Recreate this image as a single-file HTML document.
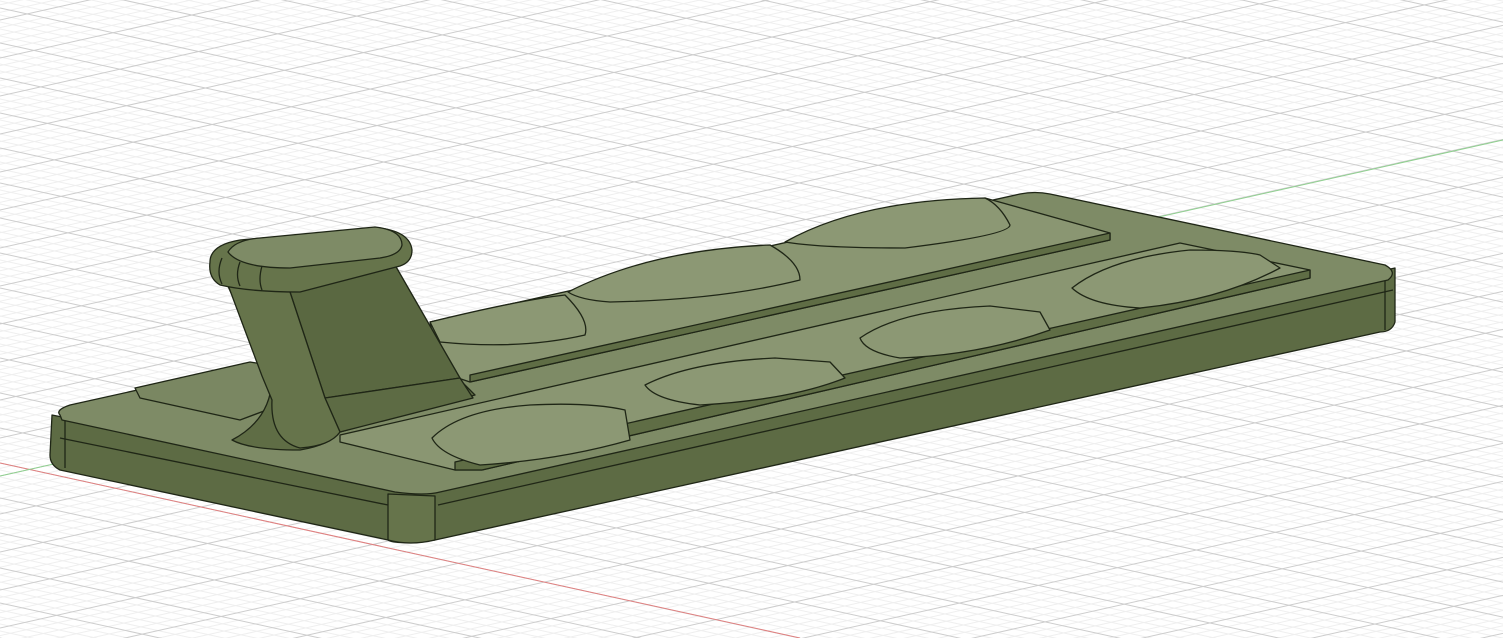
<!DOCTYPE html>
<html><head><style>html,body{margin:0;padding:0;background:#fff;overflow:hidden;width:1503px;height:638px}svg{display:block}</style></head>
<body>
<svg id="s" width="1503" height="638" viewBox="0 0 1503 638" xmlns="http://www.w3.org/2000/svg">
<rect width="1503" height="638" fill="#ffffff"/>
<g id="gmin" stroke="#efefef" stroke-width="1" fill="none"></g>
<g id="gmaj" stroke="#cdcdcd" stroke-width="1" fill="none"></g>
<line x1="0" y1="463" x2="800" y2="638" stroke="#e08080" stroke-width="1"/>
<line x1="0" y1="476" x2="1503" y2="140" stroke="#8fd08f" stroke-width="1"/>
<g stroke="#1f2616" stroke-width="1.3" stroke-linejoin="round">
<path d="M52,415 L390,482 L1395,268 L1395,322 Q1392,332 1380,332 L435,540 Q395,545 388,540 L60,470 Q50,465 50,455 Z" fill="#5d6b44"/>
<path d="M435,496 L388,494 L388,540 Q410,546 435,540 Z" fill="#66744b"/>
<line x1="60" y1="438" x2="388" y2="505" />
<line x1="438" y1="505" x2="1393" y2="290"/>
<line x1="65" y1="420" x2="65" y2="468"/>
<line x1="1385" y1="275" x2="1385" y2="330"/>
<path d="M60,415 Q55,410 70,405 L1020,194 Q1035,191 1050,194 L1385,265 Q1398,272 1388,280 L440,492 Q425,496 395,492 L62,420 Z" fill="#7e8b66"/>
<path d="M135,388 L250,362 L300,370 L280,405 L240,420 L140,398 Z" fill="#7a8762"/>
<path d="M430,322 L985,198 L1110,233 L1110,240 L470,382 L440,372 Z" fill="#8a9672"/>
<path d="M470,375 L1110,233 L1110,240 L470,382 Z" fill="#5f6d45"/>
<path d="M785,242 Q860,200 985,198 Q1000,205 1010,225 Q1010,235 905,248 Q820,248 785,242 Z" fill="#8c9874"/>
<path d="M568,292 Q650,250 770,245 Q800,262 800,280 Q720,300 610,302 Q580,300 568,292 Z" fill="#8c9874"/>
<path d="M430,322 Q520,300 565,295 Q590,320 585,335 Q520,350 440,342 Z" fill="#8c9874"/>
<path d="M340,435 L1180,243 L1310,270 L1310,278 L482,470 L455,470 L340,442 Z" fill="#8a9672"/>
<path d="M455,462 L1310,270 L1310,278 L482,470 L455,470 Z" fill="#5f6d45"/>
<path d="M1072,288 Q1110,258 1190,250 Q1240,250 1260,255 L1280,268 Q1220,300 1140,308 Q1090,305 1072,288 Z" fill="#8c9874"/>
<path d="M860,338 Q900,310 990,306 L1040,312 L1050,330 Q980,355 900,358 Q865,352 860,338 Z" fill="#8c9874"/>
<path d="M645,385 Q690,362 775,358 L830,362 L845,378 Q790,400 700,405 Q655,400 645,385 Z" fill="#8c9874"/>
<path d="M432,438 Q460,410 530,405 Q590,402 625,410 L630,440 Q560,460 480,465 Q440,455 432,438 Z" fill="#8c9874"/>
<path d="M232,440 Q270,420 272,380 L225,280 L390,265 L460,380 L475,395 L340,432 Q330,445 300,450 Q250,450 232,440 Z" fill="#5f6d45"/>
<path d="M290,292 L395,265 L460,378 L325,398 Z" fill="#5a6841"/>
<path d="M325,398 L460,378 L473,398 L340,432 Z" fill="#5d6b44"/>
<path d="M228,285 L290,292 L325,398 L340,432 Q330,446 300,448 Q270,440 272,400 L262,376 Z" fill="#66744b"/>
<path d="M210,262 Q210,245 240,240 L380,228 Q410,232 412,250 Q412,262 400,266 L300,292 Q250,292 220,285 Q208,278 210,262 Z" fill="#66744b"/>
<path d="M228,252 Q235,240 260,238 L375,227 Q402,230 402,245 Q400,255 380,258 L290,268 Q240,268 228,252 Z" fill="#7e8b66"/>
<path d="M262,266 Q258,280 262,290 M240,262 Q235,275 240,286 M222,258 Q216,272 222,284" fill="none"/>
</g>
<script>
var ns='http://www.w3.org/2000/svg';
function L(g,a,b,c,d){var l=document.createElementNS(ns,'line');l.setAttribute('x1',a);l.setAttribute('y1',b);l.setAttribute('x2',c);l.setAttribute('y2',d);g.appendChild(l);}
var mi=document.getElementById('gmin'),ma=document.getElementById('gmaj');
for(var k=-120;k<30;k++){var y=463+k*7;L(((k%5)+5)%5==0?ma:mi,0,y,1503,y+0.219*1503);}
for(var k=-65;k<75;k++){var y=476+k*7.6;L(((k%5)+5)%5==0?ma:mi,0,y,1503,y-0.224*1503);}
</script>
</svg>
</body></html>
